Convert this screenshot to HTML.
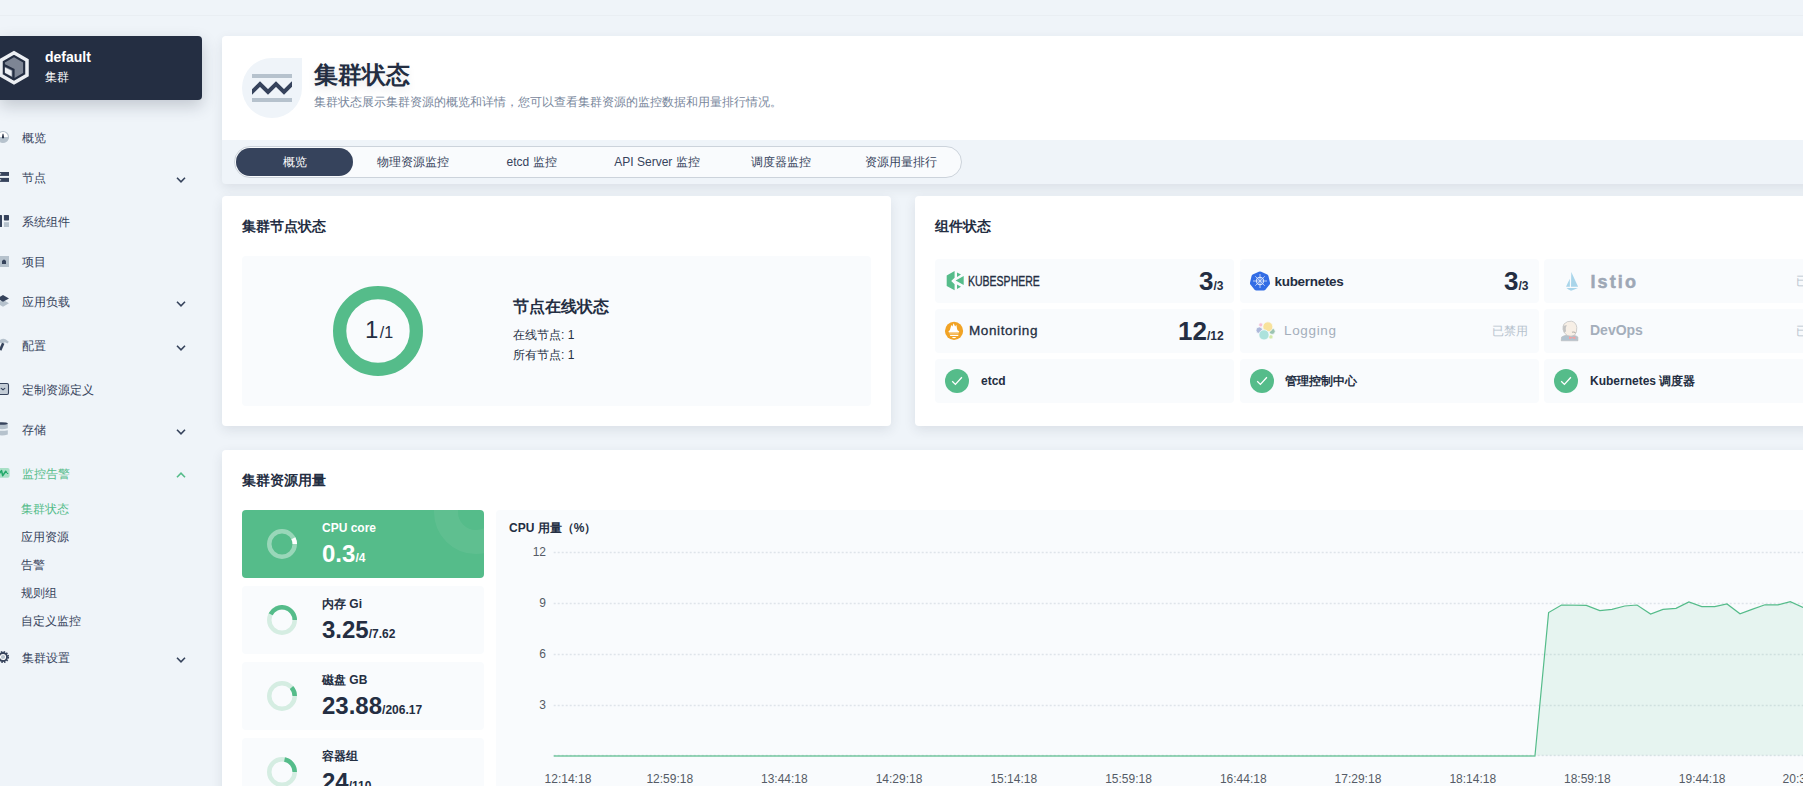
<!DOCTYPE html>
<html><head><meta charset="utf-8">
<style>
*{box-sizing:border-box;margin:0;padding:0}
html,body{width:1803px;height:786px;overflow:hidden;background:#eff4f9;font-family:"Liberation Sans",sans-serif;color:#36435c;font-size:12px;position:relative}
.a{position:absolute}
svg{display:block}
.topline{left:0;top:15px;width:1803px;height:1px;background:#e9eef3}
.ws{left:0;top:36px;width:202px;height:64px;background:#242e42;border-radius:0 4px 4px 0;box-shadow:0 6px 16px rgba(36,46,66,.22)}
.ws .n{left:45px;top:12px;color:#fff;font-weight:bold;font-size:14px;line-height:18px}
.ws .t{left:45px;top:33px;color:#fff;font-size:12px;line-height:16px}
.mi{left:22px;font-size:12px;line-height:16px;color:#36435c;white-space:nowrap}
.si{left:21px;font-size:12px;line-height:16px;color:#36435c;white-space:nowrap}
.chev{left:176px}
.card{background:#fff;border-radius:4px;box-shadow:0 4px 12px rgba(36,46,66,.10)}
.hdr{left:222px;top:36px;width:1600px;height:148px;border-radius:4px;background:#eff4f9;box-shadow:0 4px 12px rgba(36,46,66,.10);overflow:hidden}
.hdr .w{left:0;top:0;width:100%;height:104px;background:#fff}
.title{left:314px;top:60px;font-size:24px;font-weight:bold;color:#242e42;line-height:30px;text-shadow:0 4px 8px rgba(36,46,66,.1)}
.desc{left:314px;top:94px;font-size:12px;color:#79879c;line-height:16px;white-space:nowrap}
.tabs{left:234px;top:146px;width:728px;height:32px;border:1px solid #ccd3db;border-radius:16px;background:#f9fbfd}
.tab{top:0;height:30px;line-height:30px;font-size:12px;color:#36435c;text-align:center;white-space:nowrap}
.tab.act{left:1px;top:1px;width:117px;height:28px;line-height:28px;border-radius:14px;background:#36435c;color:#fff}
.h3{font-size:14px;font-weight:bold;color:#242e42;line-height:20px;white-space:nowrap}
.gbox{background:#f9fbfd;border-radius:4px}
.comp{background:#f9fbfd;border-radius:4px;width:299px;height:44px}
.num{font-weight:bold;color:#242e42;white-space:nowrap;line-height:24px}
.num b{font-size:26px}
.num i{font-style:normal;font-size:12px}
.ok{width:24px;height:24px;border-radius:50%;background:#55bc8a}
.cn{font-size:12px;font-weight:bold;color:#242e42;line-height:16px;white-space:nowrap}
.dis{font-size:12px;color:#b6c2cd;line-height:16px;white-space:nowrap}
.rbox{left:242px;width:242px;height:68px;border-radius:4px;background:#f9fbfd;overflow:hidden}
.rlab{left:80px;top:10px;font-size:12px;font-weight:bold;color:#242e42;line-height:16px;white-space:nowrap}
.rval{left:80px;top:30px;font-weight:bold;color:#242e42;white-space:nowrap;line-height:28px}
.rval b{font-size:24px}
.rval i{font-style:normal;font-size:12px}
.ylab{font-size:12px;color:#555b66;line-height:14px;text-align:right;width:30px}
.xlab{font-size:12px;color:#555b66;line-height:14px;white-space:nowrap;top:772px}
</style></head><body>
<div class="a topline"></div>

<!-- sidebar -->
<div class="a ws">
  <svg class="a" style="left:-4px;top:14px" width="36" height="36" viewBox="0 0 36 36">
    <polygon points="18,2.8 31,10.3 31,25.3 18,32.8 5,25.3 5,10.3" fill="none" stroke="#eceff3" stroke-width="3.5"/>
    <polygon points="18,7.3 27.1,12.55 27.1,23.05 18,28.3 8.9,23.05 8.9,12.55" fill="#7d8594"/>
    <polygon points="8.9,17.5 15.6,20.8 15.6,26.3 8.9,22.7" fill="#eceff3"/>
    <path d="M7.5 14.7 L17.5 19.6 L17.5 29.7" fill="none" stroke="#242e42" stroke-width="2.2"/>
  </svg>
  <div class="a n">default</div>
  <div class="a t">集群</div>
</div>

<!-- sidebar icons -->
<svg class="a" style="left:0;top:120px" width="14" height="560" viewBox="0 120 14 560">
  <circle cx="3" cy="137" r="5.5" fill="#fff" stroke="#b6c2cd" stroke-width="1.2"/>
  <path d="M-2.5 137 A5.5 5.5 0 0 0 8.5 137 Z" fill="#b6c2cd"/>
  <path d="M2.6 133.8 L3.4 133.8 L4.1 137.8 Q3 139.4 1.9 137.8 Z" fill="#242e42"/>
  <rect x="-6" y="172" width="15" height="3.9" fill="#36435c"/>
  <rect x="-6" y="177.9" width="15" height="4" fill="#36435c"/>
  <rect x="-.5" y="173.4" width="1.6" height="1" fill="#fff"/><rect x="-.5" y="179.4" width="1.6" height="1" fill="#fff"/>
  <rect x="-6" y="215" width="8" height="12" rx=".6" fill="#36435c"/>
  <rect x="3.9" y="215" width="5.1" height="5.4" rx=".6" fill="#36435c"/>
  <rect x="3.9" y="222.2" width="5.1" height="4.8" fill="#b6c2cd"/>
  <rect x="-6" y="256" width="15" height="11" fill="#b6c2cd"/>
  <path d="M2 264 L2 261 Q4 258 6 261 L6 264 Z" fill="#36435c"/>
  <path d="M-3 303.3 L3 299.8 L9 303.3 L3 306.8 Z" fill="#b6c2cd"/>
  <path d="M-3 298.4 L3 294.9 L9 298.4 L3 301.8 Z" fill="#36435c"/>
  <path d="M-1 340.8 Q2.5 337.8 5.5 339.2 L8.8 341.8 L7.6 343.6 L4.8 342.2 L3 343.5 L-1 342.5 Z" fill="#b6c2cd"/>
  <path d="M0.2 350.2 L3.2 343.2" stroke="#36435c" stroke-width="2.6" fill="none"/>
  <rect x="-6" y="383.5" width="14.5" height="11" rx="1.5" fill="#c3ccd6" stroke="#36435c" stroke-width="1.1"/>
  <path d="M1.2 388.4 L3 389.8 L4.8 388.4" stroke="#36435c" stroke-width="1.1" stroke-linecap="round" fill="none"/>
  <path d="M-4 423.5 L7.8 423.5 L7.8 428.2 Q1.9 430.2 -4 428.2 Z" fill="#b6c2cd"/>
  <ellipse cx="1.9" cy="423.5" rx="5.9" ry="1.3" fill="#36435c"/>
  <path d="M-4 430.2 Q1.9 431.4 7.8 430.2 L7.8 434.4 Q1.9 436.4 -4 434.4 Z" fill="#b6c2cd"/>
  <rect x="-6" y="468" width="15.6" height="9.7" rx="2" fill="#a9e0c7"/>
  <path d="M-1 474 L1.5 470.6 L2.7 475.6 L5.8 471.3 L6.4 472.3" stroke="#22a86a" stroke-width="1.6" stroke-linecap="round" stroke-linejoin="round" fill="none"/>
  <circle cx="7.6" cy="473.4" r=".7" fill="#22a86a"/>
  <circle cx="3" cy="657" r="4" fill="#fff" stroke="#36435c" stroke-width="1.8"/><circle cx="3" cy="657" r="2.1" fill="#b6c2cd"/>
  <circle cx="3" cy="657" r="5.2" fill="none" stroke="#36435c" stroke-width="1.8" stroke-dasharray="1.45 1.27"/>
</svg>

<div class="a mi" style="top:130px">概览</div>
<div class="a mi" style="top:170px">节点</div>
<div class="a mi" style="top:214px">系统组件</div>
<div class="a mi" style="top:254px">项目</div>
<div class="a mi" style="top:294px">应用负载</div>
<div class="a mi" style="top:338px">配置</div>
<div class="a mi" style="top:382px">定制资源定义</div>
<div class="a mi" style="top:422px">存储</div>
<div class="a mi" style="top:466px;color:#55bc8a">监控告警</div>
<div class="a si" style="top:501px;color:#55bc8a">集群状态</div>
<div class="a si" style="top:529px">应用资源</div>
<div class="a si" style="top:557px">告警</div>
<div class="a si" style="top:585px">规则组</div>
<div class="a si" style="top:613px">自定义监控</div>
<div class="a mi" style="top:650px">集群设置</div>

<svg class="a chev" style="top:177px" width="10" height="6" viewBox="0 0 10 6"><path d="M1 .8 L5 4.8 L9 .8" fill="none" stroke="#36435c" stroke-width="1.6"/></svg>
<svg class="a chev" style="top:300.6px" width="10" height="6" viewBox="0 0 10 6"><path d="M1 .8 L5 4.8 L9 .8" fill="none" stroke="#36435c" stroke-width="1.6"/></svg>
<svg class="a chev" style="top:344.8px" width="10" height="6" viewBox="0 0 10 6"><path d="M1 .8 L5 4.8 L9 .8" fill="none" stroke="#36435c" stroke-width="1.6"/></svg>
<svg class="a chev" style="top:428.8px" width="10" height="6" viewBox="0 0 10 6"><path d="M1 .8 L5 4.8 L9 .8" fill="none" stroke="#36435c" stroke-width="1.6"/></svg>
<svg class="a chev" style="top:472.4px" width="10" height="6" viewBox="0 0 10 6"><path d="M1 5.2 L5 1.2 L9 5.2" fill="none" stroke="#55bc8a" stroke-width="1.6"/></svg>
<svg class="a chev" style="top:656.7px" width="10" height="6" viewBox="0 0 10 6"><path d="M1 .8 L5 4.8 L9 .8" fill="none" stroke="#36435c" stroke-width="1.6"/></svg>

<!-- header -->
<div class="a hdr"><div class="a w"></div></div>
<svg class="a" style="left:242px;top:58px" width="60" height="60" viewBox="0 0 60 60">
  <path d="M30 0 L60 0 L60 30 A30 30 0 1 1 30 0 Z" fill="#eff4f9"/>
  <rect x="10" y="16" width="40" height="4" fill="#b6c2cd"/>
  <rect x="10" y="40" width="40" height="4" fill="#b6c2cd"/>
  <svg x="10" y="20" width="40" height="20" viewBox="10 20 40 20" overflow="hidden"><path d="M6 38 L18 26 L26 34 L34 26 L42 34 L50 26 L56 20" fill="none" stroke="#36435c" stroke-width="4" stroke-linejoin="miter"/></svg>
</svg>
<div class="a title">集群状态</div>
<div class="a desc">集群状态展示集群资源的概览和详情，您可以查看集群资源的监控数据和用量排行情况。</div>
<div class="a tabs">
  <div class="a tab act">概览</div>
  <div class="a tab" style="left:118px;width:120px">物理资源监控</div>
  <div class="a tab" style="left:236.5px;width:120px">etcd 监控</div>
  <div class="a tab" style="left:358px;width:128px">API Server 监控</div>
  <div class="a tab" style="left:486px;width:120px">调度器监控</div>
  <div class="a tab" style="left:606px;width:120px">资源用量排行</div>
</div>

<!-- node status card -->
<div class="a card" style="left:222px;top:196px;width:669px;height:230px"></div>
<div class="a h3" style="left:242px;top:216px">集群节点状态</div>
<div class="a gbox" style="left:242px;top:256px;width:629px;height:150px"></div>
<svg class="a" style="left:333px;top:285.5px" width="90" height="90" viewBox="0 0 90 90"><circle cx="45" cy="45" r="38.35" fill="none" stroke="#55bc8a" stroke-width="13.3"/></svg>
<div class="a num" style="left:365px;top:316px;font-weight:normal;line-height:28px"><b style="font-weight:normal;font-size:24px">1</b><i style="font-size:16px;margin-left:1.5px">/1</i></div>
<div class="a" style="left:513px;top:297px;font-size:16px;font-weight:bold;color:#242e42;line-height:20px">节点在线状态</div>
<div class="a" style="left:513px;top:327px;font-size:12px;color:#242e42;line-height:16px">在线节点: 1</div>
<div class="a" style="left:513px;top:347px;font-size:12px;color:#242e42;line-height:16px">所有节点: 1</div>

<!-- component card -->
<div class="a card" style="left:915px;top:196px;width:900px;height:230px"></div>
<div class="a h3" style="left:935px;top:216px">组件状态</div>

<div class="a comp" style="left:935px;top:259px"></div>
<div class="a comp" style="left:1240px;top:259px"></div>
<div class="a comp" style="left:1544px;top:259px"></div>
<div class="a comp" style="left:935px;top:309px"></div>
<div class="a comp" style="left:1240px;top:309px"></div>
<div class="a comp" style="left:1544px;top:309px"></div>
<div class="a comp" style="left:935px;top:359px"></div>
<div class="a comp" style="left:1240px;top:359px"></div>
<div class="a comp" style="left:1544px;top:359px"></div>

<!-- kubesphere -->
<svg class="a" style="left:946px;top:270px" width="19" height="21" viewBox="0 0 19 21">
  <path d="M8.6 1 L0.7 5.6 L0.7 16 L8.6 20.3 L8.6 14.2 L5.2 11 L8.6 7.8 Z" fill="#55bc8a"/>
  <path d="M11 2.5 L15 4.6 L11 7 Z M17.7 6 L17.7 15 L9.6 10.6 Z M11 14.6 L15 16.8 L11 19 Z" fill="#55bc8a"/>
</svg>
<div class="a" style="left:968px;top:273px;font-size:14.6px;line-height:16px;color:#242e42;-webkit-text-stroke:.35px #242e42;transform:scaleX(.72);transform-origin:0 0;white-space:nowrap">KUBESPHERE</div>
<div class="a num" style="left:1199px;top:269px"><b>3</b><i>/3</i></div>

<!-- kubernetes -->
<svg class="a" style="left:1250px;top:271px" width="20" height="20" viewBox="0 0 20 20">
  <path d="M10 .4 Q10.6 .4 11.2 .7 L17.3 3.6 Q18.3 4.1 18.5 5.2 L20 11.7 Q20.2 12.7 19.6 13.5 L15.4 18.8 Q14.8 19.6 13.7 19.6 L6.3 19.6 Q5.2 19.6 4.6 18.8 L.4 13.5 Q-.2 12.7 0 11.7 L1.5 5.2 Q1.7 4.1 2.7 3.6 L8.8 .7 Q9.4 .4 10 .4 Z" fill="#326ce5"/>
  <g stroke="#fff" fill="none" opacity=".8"><circle cx="10" cy="10" r="3.6" stroke-width="1.1"/><path d="M10 3V17M3 10H17M5.3 5.3L14.7 14.7M14.7 5.3L5.3 14.7" stroke-width=".8"/></g>
</svg>
<div class="a" style="left:1274.5px;top:274px;font-size:13.5px;font-weight:bold;letter-spacing:-.3px;line-height:16px;color:#242e42;white-space:nowrap">kubernetes</div>
<div class="a num" style="left:1504px;top:269px"><b>3</b><i>/3</i></div>

<!-- istio -->
<svg class="a" style="left:1564px;top:271px" width="16" height="21" viewBox="0 0 16 21">
  <path d="M7.3 1 L14.1 15.8 L7 15.8 Z" fill="#a9d5ea"/><path d="M5.8 7.8 L5.9 15.8 L2 15.8 Z" fill="#a9d5ea"/><path d="M2.5 17.1 L13.8 17.1 Q10.5 19 7 19.7 Q4.2 18.6 2.5 17.1 Z" fill="#a9d5ea"/>
</svg>
<div class="a" style="left:1590.5px;top:270px;font-size:18px;font-weight:bold;letter-spacing:2.1px;color:#9ea8b6;-webkit-text-stroke:.5px #9ea8b6;line-height:24px;white-space:nowrap">Istio</div>
<div class="a dis" style="left:1796px;top:273px">已禁用</div>

<!-- monitoring -->
<svg class="a" style="left:944px;top:321px" width="20" height="20" viewBox="0 0 20 20">
  <circle cx="10.05" cy="9.9" r="9.1" fill="#f1a325"/>
  <path d="M5 11.4 L4.4 10.4 Q6.2 9.6 6.2 8.1 L7.3 4.1 L8.4 5.6 L9.6 2.3 L11.1 5.6 L12.35 3.65 L13.1 8.1 Q13.1 9.6 15.2 10.4 L14.9 11.4 Z" fill="#fff"/>
  <rect x="5.4" y="12.3" width="9.2" height="1" fill="#fff" opacity=".45"/>
  <rect x="6.1" y="13.9" width="8.2" height="1.1" fill="#fff"/>
  <path d="M7.8 16 L12.35 16 Q10.1 18.4 7.8 16 Z" fill="#fff"/>
</svg>
<div class="a" style="left:969px;top:321.5px;font-size:13.5px;letter-spacing:.6px;color:#242e42;line-height:17px;white-space:nowrap;-webkit-text-stroke:.3px #242e42">Monitoring</div>
<div class="a num" style="left:1178px;top:319px"><b>12</b><i>/12</i></div>

<!-- logging -->
<svg class="a" style="left:1255px;top:321px" width="21" height="20" viewBox="0 0 21 20">
  <g stroke="#f9fbfd" stroke-width=".8">
  <circle cx="5.8" cy="3.9" r="2.1" fill="#f6bfd6"/>
  <circle cx="4.3" cy="9.25" r="3.3" fill="#adb8da"/>
  <circle cx="17.1" cy="10.35" r="3.1" fill="#9cc4b2"/>
  <circle cx="15.9" cy="15.9" r="2.2" fill="#d5eaa9"/>
  <circle cx="12.85" cy="5.85" r="5" fill="#f8e29c"/>
  <circle cx="9" cy="13.9" r="5.1" fill="#ace2dc"/>
  </g>
</svg>
<div class="a" style="left:1284px;top:321.5px;font-size:13.5px;color:#a4aebb;line-height:17px;letter-spacing:.65px;white-space:nowrap">Logging</div>
<div class="a dis" style="left:1492px;top:323px">已禁用</div>

<!-- devops -->
<svg class="a" style="left:1560px;top:320px" width="19" height="22" viewBox="0 0 19 22">
  <path d="M1.2 20.8 L1.6 17 Q4 15.4 7 15.2 L13 15.2 Q16.5 15.6 17.9 17 L17.9 20.8 Z" fill="#b3c3cf" stroke="#b9b9b9" stroke-width=".6"/>
  <path d="M4 4 Q7 .8 11.5 1.2 Q16.2 2.2 16.8 7.5 Q17.2 12.5 14.5 15.2 Q11 17 7.5 15.6 Q3.8 13.6 3 9.5 Q2.7 6 4 4 Z" fill="#f7efe6" stroke="#bdbdbd" stroke-width=".7"/>
  <path d="M3.2 6 Q2.4 9.5 4 12.5 L6 11.5 Q5 8 6.8 5 Z" fill="#c4c4c4"/>
  <path d="M12 12.2 Q14 11.5 15.5 12.8" stroke="#b5b0aa" stroke-width="1.1" fill="none"/>
  <path d="M9 16.3 L12 17.6 L15.4 16.3 L15.4 19.2 L12 18 L9 19.2 Z" fill="#f4a3a3"/>
</svg>
<div class="a" style="left:1590px;top:322px;font-size:14px;font-weight:bold;color:#a4aebb;line-height:17px;white-space:nowrap">DevOps</div>
<div class="a dis" style="left:1796px;top:323px">已禁用</div>

<!-- checks -->
<div class="a ok" style="left:945px;top:369px"><svg width="24" height="24" viewBox="0 0 24 24"><path d="M7.2 12.3 L10.4 15.4 L16.9 8.3" fill="none" stroke="#fff" stroke-width="1.3"/></svg></div>
<div class="a cn" style="left:981px;top:373px">etcd</div>
<div class="a ok" style="left:1250px;top:369px"><svg width="24" height="24" viewBox="0 0 24 24"><path d="M7.2 12.3 L10.4 15.4 L16.9 8.3" fill="none" stroke="#fff" stroke-width="1.3"/></svg></div>
<div class="a cn" style="left:1285px;top:373px">管理控制中心</div>
<div class="a ok" style="left:1554px;top:369px"><svg width="24" height="24" viewBox="0 0 24 24"><path d="M7.2 12.3 L10.4 15.4 L16.9 8.3" fill="none" stroke="#fff" stroke-width="1.3"/></svg></div>
<div class="a cn" style="left:1590px;top:373px">Kubernetes 调度器</div>

<!-- resource card -->
<div class="a card" style="left:222px;top:450px;width:1600px;height:400px"></div>
<div class="a h3" style="left:242px;top:470px">集群资源用量</div>

<div class="a rbox" style="top:510px;background:#55bc8a">
  <svg class="a" style="left:0;top:0" width="242" height="68"><circle cx="234" cy="2" r="30" fill="none" stroke="rgba(255,255,255,.06)" stroke-width="24"/></svg>
  <svg class="a" style="left:25px;top:19px" width="30" height="30" viewBox="0 0 30 30"><circle cx="15" cy="15" r="12.75" fill="none" stroke="rgba(255,255,255,.4)" stroke-width="4.5"/><path d="M27.75 15 A12.75 12.75 0 0 0 26.36 9.21" fill="none" stroke="#fff" stroke-width="4.5"/></svg>
  <div class="a rlab" style="color:#fff">CPU core</div>
  <div class="a rval" style="color:#fff"><b>0.3</b><i>/4</i></div>
</div>
<div class="a rbox" style="top:586px">
  <svg class="a" style="left:25px;top:19px" width="30" height="30" viewBox="0 0 30 30"><circle cx="15" cy="15" r="12.75" fill="none" stroke="#d5ede2" stroke-width="4.5"/><path d="M27.75 15 A12.75 12.75 0 0 0 3.59 9.32" fill="none" stroke="#55bc8a" stroke-width="4.5"/></svg>
  <div class="a rlab">内存 Gi</div>
  <div class="a rval"><b>3.25</b><i>/7.62</i></div>
</div>
<div class="a rbox" style="top:662px">
  <svg class="a" style="left:25px;top:19px" width="30" height="30" viewBox="0 0 30 30"><circle cx="15" cy="15" r="12.75" fill="none" stroke="#d5ede2" stroke-width="4.5"/><path d="M27.75 15 A12.75 12.75 0 0 0 24.52 6.52" fill="none" stroke="#55bc8a" stroke-width="4.5"/></svg>
  <div class="a rlab">磁盘 GB</div>
  <div class="a rval"><b>23.88</b><i>/206.17</i></div>
</div>
<div class="a rbox" style="top:738px">
  <svg class="a" style="left:25px;top:19px" width="30" height="30" viewBox="0 0 30 30"><circle cx="15" cy="15" r="12.75" fill="none" stroke="#d5ede2" stroke-width="4.5"/><path d="M27.75 15 A12.75 12.75 0 0 0 17.53 2.5" fill="none" stroke="#55bc8a" stroke-width="4.5"/></svg>
  <div class="a rlab">容器组</div>
  <div class="a rval"><b>24</b><i>/110</i></div>
</div>

<!-- chart -->
<div class="a gbox" style="left:496px;top:510px;width:1320px;height:300px"></div>
<div class="a" style="left:509px;top:520px;font-size:12px;font-weight:bold;color:#242e42;line-height:16px;white-space:nowrap">CPU 用量（%）</div>
<svg class="a" style="left:496px;top:510px" width="1307" height="276" viewBox="0 0 1307 276">
  <g stroke="#dfe4ea" stroke-width="1.6" stroke-dasharray="2 2">
    <line x1="57.7" y1="42.5" x2="1307" y2="42.5"/>
    <line x1="57.7" y1="93.5" x2="1307" y2="93.5"/>
    <line x1="57.7" y1="144.5" x2="1307" y2="144.5"/>
    <line x1="57.7" y1="195.5" x2="1307" y2="195.5"/>
    <line x1="57.7" y1="245.5" x2="1307" y2="245.5"/>
  </g>
  <line x1="57.7" y1="246" x2="1039.5" y2="246" stroke="#55bc8a" stroke-width="2" opacity=".6"/>
  <path d="M1039.0 245.5 L1052.6 102.6 L1065.5 95.0 L1090.3 95.4 L1103.8 100.6 L1116.0 99.4 L1128.8 96.0 L1141.0 95.0 L1154.6 104.0 L1167.0 99.4 L1180.0 98.3 L1192.9 92.0 L1205.8 96.6 L1218.7 96.6 L1231.0 94.0 L1244.0 103.8 L1256.0 99.4 L1269.0 94.8 L1282.0 94.8 L1294.3 91.7 L1307.0 97.4 L1319.0 100.0 L1319.0 245.5 L1039.0 245.5 Z" fill="rgba(85,188,138,.11)"/>
  <path d="M1039.0 245.5 L1052.6 102.6 L1065.5 95.0 L1090.3 95.4 L1103.8 100.6 L1116.0 99.4 L1128.8 96.0 L1141.0 95.0 L1154.6 104.0 L1167.0 99.4 L1180.0 98.3 L1192.9 92.0 L1205.8 96.6 L1218.7 96.6 L1231.0 94.0 L1244.0 103.8 L1256.0 99.4 L1269.0 94.8 L1282.0 94.8 L1294.3 91.7 L1307.0 97.4 L1319.0 100.0" fill="none" stroke="#55bc8a" stroke-width="1.2"/>
</svg>
<div class="a ylab" style="left:516px;top:545px">12</div>
<div class="a ylab" style="left:516px;top:596px">9</div>
<div class="a ylab" style="left:516px;top:647px">6</div>
<div class="a ylab" style="left:516px;top:698px">3</div>
<div class="a xlab" style="left:544.6px">12:14:18</div>
<div class="a xlab" style="left:646.4px">12:59:18</div>
<div class="a xlab" style="left:761px">13:44:18</div>
<div class="a xlab" style="left:875.7px">14:29:18</div>
<div class="a xlab" style="left:990.4px">15:14:18</div>
<div class="a xlab" style="left:1105.2px">15:59:18</div>
<div class="a xlab" style="left:1219.9px">16:44:18</div>
<div class="a xlab" style="left:1334.6px">17:29:18</div>
<div class="a xlab" style="left:1449.4px">18:14:18</div>
<div class="a xlab" style="left:1564px">18:59:18</div>
<div class="a xlab" style="left:1678.8px">19:44:18</div>
<div class="a xlab" style="left:1782.6px">20:33:18</div>

</body></html>
